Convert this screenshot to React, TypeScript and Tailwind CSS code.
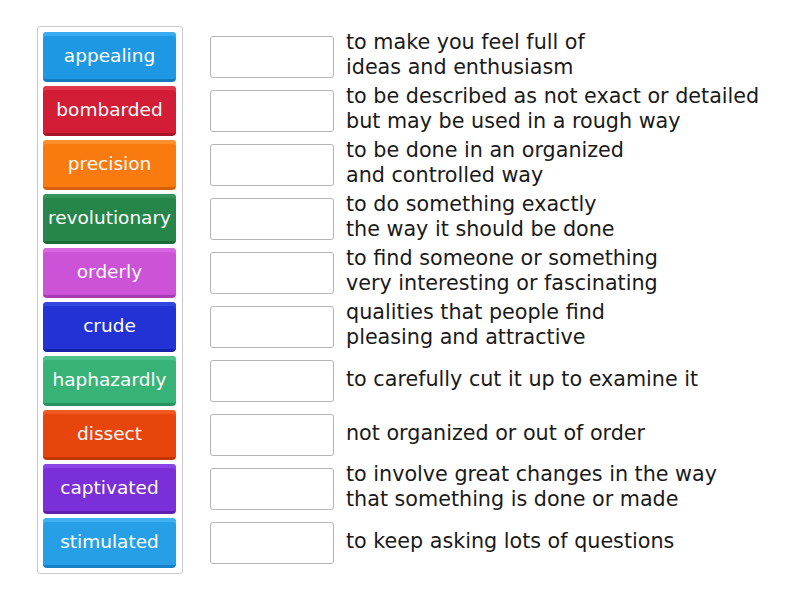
import { FunctionComponent } from "react";

type Row = {
  word: string;
  tile: string;
  clue: string[];
};

const rows: Row[] = [
  { word: "appealing", tile: "bg-[#1f98e4] border-b-[#137ac0] shadow-[inset_0_4px_0_#39abf0]", clue: ["to make you feel full of", "ideas and enthusiasm"] },
  { word: "bombarded", tile: "bg-[#d31c35] border-b-[#a8142a] shadow-[inset_0_4px_0_#e0364c]", clue: ["to be described as not exact or detailed", "but may be used in a rough way"] },
  { word: "precision", tile: "bg-[#f97b10] border-b-[#d6600a] shadow-[inset_0_4px_0_#fb8f2c]", clue: ["to be done in an organized", "and controlled way"] },
  { word: "revolutionary", tile: "bg-[#268548] border-b-[#1b6a37] shadow-[inset_0_4px_0_#339658]", clue: ["to do something exactly", "the way it should be done"] },
  { word: "orderly", tile: "bg-[#cc52d8] border-b-[#a93ab6] shadow-[inset_0_4px_0_#d868e2]", clue: ["to find someone or something", "very interesting or fascinating"] },
  { word: "crude", tile: "bg-[#2232d4] border-b-[#1622a8] shadow-[inset_0_4px_0_#3446e2]", clue: ["qualities that people find", "pleasing and attractive"] },
  { word: "haphazardly", tile: "bg-[#38b378] border-b-[#259360] shadow-[inset_0_4px_0_#4cc28a]", clue: ["to carefully cut it up to examine it"] },
  { word: "dissect", tile: "bg-[#e8450d] border-b-[#c23505] shadow-[inset_0_4px_0_#f05a22]", clue: ["not organized or out of order"] },
  { word: "captivated", tile: "bg-[#7a2fd8] border-b-[#5e1fb2] shadow-[inset_0_4px_0_#8c44e6]", clue: ["to involve great changes in the way", "that something is done or made"] },
  { word: "stimulated", tile: "bg-[#279fe6] border-b-[#1580c6] shadow-[inset_0_4px_0_#40b0f2]", clue: ["to keep asking lots of questions"] },
];

const App: FunctionComponent = () => {
  return (
    <div className="w-[800px] h-[600px] bg-white font-['DejaVu_Sans',sans-serif] flex flex-row items-start pt-[26px] pl-[37px]">
      <div className="w-[146px] flex flex-col gap-[4px] border border-[#c9c9c9] rounded-[3px] pt-[5px] pb-[5px] pl-[5px] pr-[6px]">
        {rows.map((r) => (
          <div
            key={r.word}
            className={`h-[50px] w-[133px] rounded-[4px] border-b-[3px] flex items-center justify-center text-white text-[18.5px] leading-none pt-[2px] ${r.tile}`}
          >
            {r.word}
          </div>
        ))}
      </div>
      <div className="flex flex-col gap-[4px] mt-[6px] ml-[27px]">
        {rows.map((r) => (
          <div key={r.word} className="h-[50px] flex flex-row items-center">
            <div className="w-[124px] h-[42px] shrink-0 border border-[#b4b4b4] rounded-[3px] bg-white" />
            <div className="ml-[12px] -mt-[4px] text-[20.7px] leading-[25px] text-[#1a1a1a] whitespace-nowrap">
              {r.clue.map((l) => (
                <p key={l} className="m-0">
                  {l}
                </p>
              ))}
            </div>
          </div>
        ))}
      </div>
    </div>
  );
};

export default App;
